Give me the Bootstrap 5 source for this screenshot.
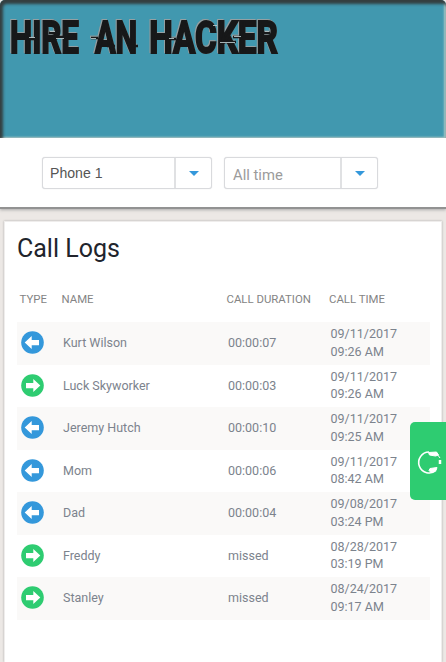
<!DOCTYPE html>
<html lang="en">
<head>
<meta charset="utf-8">
<meta name="viewport" content="width=device-width, initial-scale=1">
<title>Call Logs</title>
<link href="https://cdn.jsdelivr.net/npm/bootstrap@5.3.0/dist/css/bootstrap.min.css" rel="stylesheet">
<style>
body{font-family:Roboto,"Liberation Sans",sans-serif;background:#ece8e5;height:662px;font-size:12.5px;color:#7c838d}
.hero{height:138px;background:#4198af;border-radius:5px 5px 0 0;box-shadow:inset 2px 3px 3px 1px #343f40,inset -2px -1px 2px #a9ccca}
.wordmark{filter:drop-shadow(-.8px -.6px 0 #93a0a3) drop-shadow(.5px .4px 0 #7f8a8c)}
.filters{height:71px;padding:19px 0 0 42px;gap:12px;border-bottom:2px solid #929292;box-shadow:0 1px 3px #aaa}
.picker{height:32px;border:1px solid #d9dadd;box-shadow:0 0 1px #d0d1d4;border-radius:3px;background:#fff;color:#9b9b9b;font-size:14.8px}
.picker-phone{width:170px;font-family:"Liberation Sans",sans-serif;color:#555;font-size:14.1px}
.picker-time{width:154px}
.picker-text{padding:2px 0 0 7px;border-right:2px solid #e0e1e3}
.picker-time .picker-text{padding:5px 0 0 8px}
.picker-arrow{width:35px}
.logs{margin:12px 4px 0;height:441px;border:1px solid #efedec;border-bottom:0;box-shadow:0 0 2px #aaa;padding:12px 12px 0}
.logs h1{font-size:25px;line-height:30px;color:#21242c;height:50px}
.calls{width:413px;table-layout:fixed}
.calls th{height:38px;padding:0 0 8px 2.5px;font-size:11.4px;font-weight:400;color:#848484;line-height:14px;white-space:nowrap}
.calls th:last-child{padding-left:2px}
.calls td{height:42.5px;padding:0 0 1px 4px;line-height:17.5px}
.calls td:first-child{padding-left:3.5px}
.calls tbody tr:nth-child(odd){background:#faf9f8}
.calls td:last-child{font-size:12.5px;padding-left:3.500px}
.calls svg{display:block}
.help{top:422px;right:0;width:36px;height:78px;background:#2ecc71;border-radius:5px 0 0 5px}
</style>
<script src="https://cdn.jsdelivr.net/npm/bootstrap@5.3.0/dist/js/bootstrap.bundle.min.js"></script>
</head>
<body class="overflow-hidden position-relative">
<svg class="d-none">
<symbol id="in" viewBox="0 0 23 23"><circle cx="11.5" cy="11.5" r="11.3" fill="#3498db"/><path d="M3.7 11.5 10.7 5v4H18v5.3h-7.3v3.8z" fill="#fff"/></symbol>
<symbol id="out" viewBox="0 0 23 23"><circle cx="11.5" cy="11.5" r="11.3" fill="#2ecc71"/><path d="M19.3 11.5 12.3 5v4H5v5.3h7.3v3.8z" fill="#fff"/></symbol>
</svg>
<header class="hero">
<svg class="d-block" width="300" height="70" viewBox="0 0 300 70" role="img" aria-label="Hire an hacker">
<g class="wordmark">
<g font-family="Roboto" font-weight="700" font-size="45" fill="#171819" stroke="#171819" stroke-width="2" transform="scale(.65 1)">
<text x="15.500" y="53" textLength="106" lengthAdjust="spacingAndGlyphs">HIRE</text>
<text x="146" y="53" textLength="65" lengthAdjust="spacingAndGlyphs">AN</text>
<text x="229.500" y="53" textLength="198" lengthAdjust="spacingAndGlyphs">HACKER</text>
</g>
<path d="M28 39h8M49 33h6M55 37h9M91 38h7M107 46h8M131 46h7M169 39h7M220 42h16M233 37h9M264 33h6" stroke="#171819" stroke-width="2.4"/>
</g>
<path d="M29 37.5h6M50 31.5h5M56 38.5h8M91 38.5h5M169 38.5h5M213 25.5h4M220 42.5h15M234 36.5h7M265 31.5h4" stroke="#b6c4c6" stroke-width=".9"/>
</svg>
</header>
<section class="filters bg-white d-flex align-items-start position-relative">
<div class="picker picker-phone d-flex"><span class="picker-text flex-grow-1 d-flex align-items-center">Phone 1</span><span class="picker-arrow d-flex align-items-center justify-content-center"><svg width="10" height="5"><path d="M0 0h10L5 5z" fill="#3498db"/></svg></span></div>
<div class="picker picker-time d-flex"><span class="picker-text flex-grow-1 d-flex align-items-center">All time</span><span class="picker-arrow d-flex align-items-center justify-content-center"><svg width="10" height="5"><path d="M0 0h10L5 5z" fill="#3498db"/></svg></span></div>
</section>
<main class="logs bg-white">
<h1 class="fw-normal mb-0">Call Logs</h1>
<table class="calls">
<colgroup><col style="width:42px"><col style="width:165px"><col style="width:103px"><col></colgroup>
<thead><tr><th>TYPE</th><th>NAME</th><th>CALL DURATION</th><th>CALL TIME</th></tr></thead>
<tbody>
<tr><td><svg width="23" height="23"><use href="#in"/></svg></td><td>Kurt Wilson</td><td>00:00:07</td><td>09/11/2017<br>09:26 AM</td></tr>
<tr><td><svg width="23" height="23"><use href="#out"/></svg></td><td>Luck Skyworker</td><td>00:00:03</td><td>09/11/2017<br>09:26 AM</td></tr>
<tr><td><svg width="23" height="23"><use href="#in"/></svg></td><td>Jeremy Hutch</td><td>00:00:10</td><td>09/11/2017<br>09:25 AM</td></tr>
<tr><td><svg width="23" height="23"><use href="#in"/></svg></td><td>Mom</td><td>00:00:06</td><td>09/11/2017<br>08:42 AM</td></tr>
<tr><td><svg width="23" height="23"><use href="#in"/></svg></td><td>Dad</td><td>00:00:04</td><td>09/08/2017<br>03:24 PM</td></tr>
<tr><td><svg width="23" height="23"><use href="#out"/></svg></td><td>Freddy</td><td>missed</td><td>08/28/2017<br>03:19 PM</td></tr>
<tr><td><svg width="23" height="23"><use href="#out"/></svg></td><td>Stanley</td><td>missed</td><td>08/24/2017<br>09:17 AM</td></tr>
</tbody>
</table>
</main>
<aside class="help position-absolute d-flex align-items-center ps-1">
<svg width="30" height="30" viewBox="0 0 30 30" fill="none" stroke="#fff"><path d="M15 6A10.5 10.5 0 1 0 22 24.500" stroke-width="1.6"/><path d="M14.500 6.500l8-.5 2 3-3 1-6-1zM15 24.500l1-2 7-1-1 3-5 2z" fill="#fff"/><path d="M23 8l3 4" stroke-width="1"/><path d="M26 14v4" stroke-width="2.500"/></svg>
</aside>
</body>
</html>
